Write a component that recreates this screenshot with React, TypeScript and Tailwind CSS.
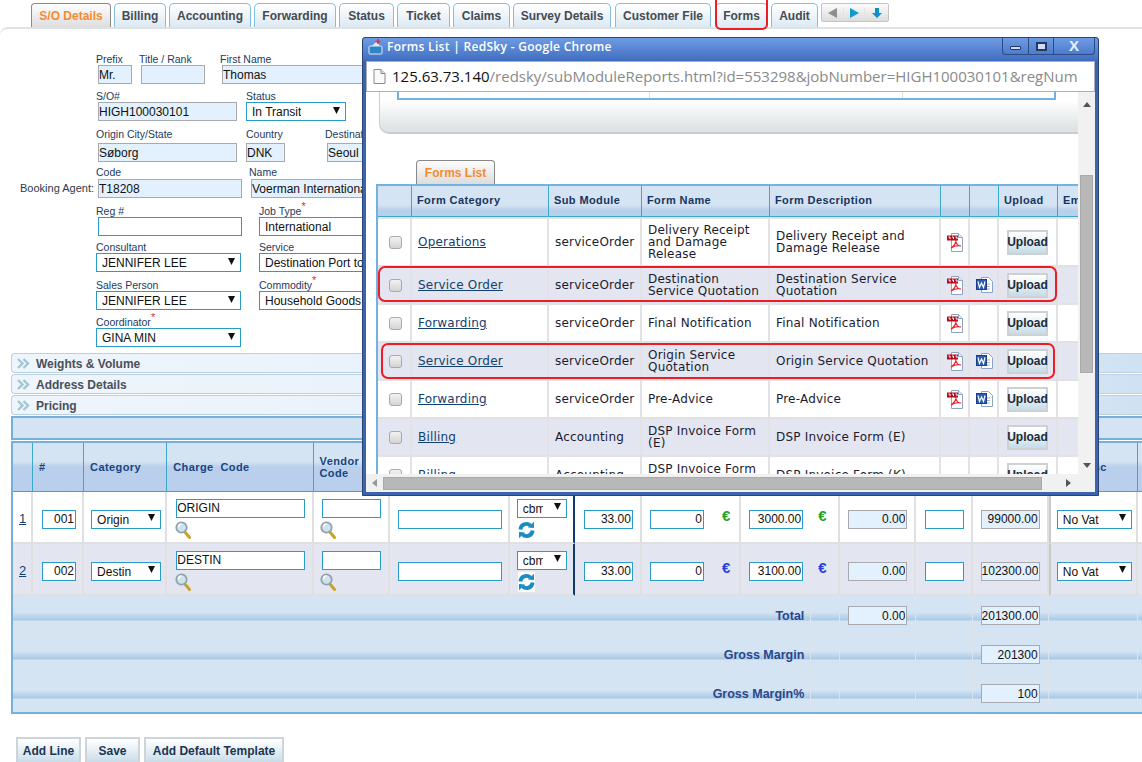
import React from 'react';

const ARIAL = "font-['Liberation_Sans',Arial,sans-serif]";
const POPUP_FONT = "font-['DejaVu_Sans',Verdana,sans-serif] tracking-[0.2px]";

const TABS = [
  { name: 'Billing', w: 'w-[52px]' },
  { name: 'Accounting', w: 'w-[82px]' },
  { name: 'Forwarding', w: 'w-[82px]' },
  { name: 'Status', w: 'w-[55px]' },
  { name: 'Ticket', w: 'w-[53px]' },
  { name: 'Claims', w: 'w-[57px]' },
  { name: 'Survey Details', w: 'w-[98px]' },
  { name: 'Customer File', w: 'ml-[1px] w-[96px]' },
  { name: 'Forms', w: 'ml-[1px] w-[53px]' },
  { name: 'Audit', w: 'w-[47px]' },
];

const FORM_ROWS = [
  { cat: 'Operations', mod: 'serviceOrder', name: 'Delivery Receipt\nand Damage\nRelease', desc: 'Delivery Receipt and\nDamage Release', pdf: true, doc: false, tall: true },
  { cat: 'Service Order', mod: 'serviceOrder', name: 'Destination\nService Quotation', desc: 'Destination Service\nQuotation', pdf: true, doc: true },
  { cat: 'Forwarding', mod: 'serviceOrder', name: 'Final Notification', desc: 'Final Notification', pdf: true, doc: false },
  { cat: 'Service Order', mod: 'serviceOrder', name: 'Origin Service\nQuotation', desc: 'Origin Service Quotation', pdf: true, doc: true },
  { cat: 'Forwarding', mod: 'serviceOrder', name: 'Pre-Advice', desc: 'Pre-Advice', pdf: true, doc: true },
  { cat: 'Billing', mod: 'Accounting', name: 'DSP Invoice Form\n(E)', desc: 'DSP Invoice Form (E)', pdf: false, doc: false },
  { cat: 'Billing', mod: 'Accounting', name: 'DSP Invoice Form\n(K)', desc: 'DSP Invoice Form (K)', pdf: false, doc: false },
];

const CHARGE_ROWS = [
  { no: '1', seq: '001', cat: 'Origin', code: 'ORIGIN', rate: '3000.00', euro: 'text-[#1fa32a]', total: '99000.00' },
  { no: '2', seq: '002', cat: 'Destin', code: 'DESTIN', rate: '3100.00', euro: 'text-[#1f3fe0]', total: '102300.00' },
];

const Tri = ({ className = '' }: { className?: string }) => (
  <svg width="7" height="7" viewBox="0 0 7 7" className={className}>
    <polygon points="0,0 7,0 3.500,7" fill="#111" />
  </svg>
);

const Input = ({ value = '', readOnly = false, right = false, className = '' }: { value?: string; readOnly?: boolean; right?: boolean; className?: string }) => (
  <input
    readOnly
    value={value}
    className={`block h-[19px] min-w-0 border pl-0 pr-[1px] text-[12px] text-[#111] outline-none ${ARIAL} ${right ? 'text-right' : ''} ${readOnly ? 'border-[#a9a9b0] bg-[#e3f0fd]' : 'border-[#2a9bc8] bg-white'} ${className}`}
  />
);

const Select = ({ value, className = '', textW = '' }: { value: string; className?: string; textW?: string }) => (
  <div className={`flex h-[19px] items-center justify-between border border-[#2a9bc8] bg-white pl-[5px] pr-[5px] text-[12px] text-[#111] ${ARIAL} ${className}`}>
    <span className={`overflow-hidden whitespace-nowrap pt-[1px] ${textW}`}>{value}</span>
    <Tri className="mb-[3px] shrink-0" />
  </div>
);

const Label = ({ text, star = false, h = 'h-[12px]' }: { text: string; star?: boolean; h?: string }) => (
  <div className={`whitespace-nowrap text-[10.5px] leading-[12px] text-[#1d3a5f] ${h}`}>
    {text}
    {star && <sup className="text-[11px] leading-[0] text-[#ee1c25]">*</sup>}
  </div>
);

const Accordion = ({ text }: { text: string }) => (
  <div className="ml-[11px] mb-[1px] flex h-[20px] items-center rounded-l-[4px] border border-r-0 border-[#bcd0e4] bg-[linear-gradient(90deg,#eef5fc_0%,#e6f0fa_60%,#d0e2f2_100%)] pl-[5px]">
    <svg width="13" height="11" viewBox="0 0 13 11" fill="none" stroke="#a3c6d2" strokeWidth="2.4">
      <path d="M1 1l4.500 4.500L1 10M6.500 1L11 5.500 6.500 10" />
    </svg>
    <span className="ml-[6px] pt-[1px] text-[12px] font-bold text-[#4b4f57]">{text}</span>
  </div>
);

const Lens = () => (
  <svg width="17" height="19" viewBox="0 0 17 19" className="block">
    <path d="M9.500 10.500l5 6" stroke="#c9a227" strokeWidth="3" strokeLinecap="round" />
    <circle cx="6.500" cy="6.500" r="5.200" fill="#cfe3ee" stroke="#8ea3ad" strokeWidth="1.800" />
    <path d="M3.500 6a3 3 0 0 1 3-3" stroke="#fff" strokeWidth="1.400" fill="none" />
  </svg>
);

const Refresh = () => (
  <svg width="17" height="20" viewBox="0 0 17 20" className="block bg-white">
    <g fill="none" stroke="#1a8cc4" strokeWidth="3.800">
      <path d="M2.400 9.500a6 6 0 0 1 10-4" />
      <path d="M14.600 10.500a6 6 0 0 1-10 4" />
    </g>
    <polygon points="10,7.500 16,8 16,1.800" fill="#1a8cc4" />
    <polygon points="7,12.500 1,12 1,18.200" fill="#1a8cc4" />
  </svg>
);

const PdfIcon = () => (
  <svg width="17" height="19" viewBox="0 0 17 19" className="block">
    <path d="M4.500 .5h7l4 4v14h-11z" fill="#fff" stroke="#8ea4c4" />
    <path d="M11.500 .5v4h4" fill="#e3ebf5" stroke="#8ea4c4" />
    <rect x="0" y="2.500" width="11" height="5" fill="#b0101c" />
    <path d="M1.500 4h1.500v2M5 4h1.500v2M8.500 4H10v2" stroke="#fff" strokeWidth="1" fill="none" />
    <path d="M9 7c0 3-2 6-5 8 3-2 7-3 10-2-3 0-5-3-5.500-6z" fill="none" stroke="#e8262c" strokeWidth="1.200" />
  </svg>
);

const WordIcon = () => (
  <svg width="17" height="17" viewBox="0 0 17 17" className="block">
    <path d="M5.500 .5h7l4 4v11h-11z" fill="#fff" stroke="#8ea4c4" />
    <path d="M8 7h6M10 9.500h4M8 12h6" stroke="#9fb3d0" />
    <rect x="0.500" y="2.500" width="10" height="10" fill="#2a5bb5" stroke="#1c3f86" />
    <path d="M2 4.500l1.500 6 2-4.500 2 4.500 1.500-6" fill="none" stroke="#fff" strokeWidth="1.200" />
  </svg>
);

const Upload = () => (
  <div className={`flex h-[25px] w-[41px] items-center justify-center border-2 border-[#cdd1d4] bg-[linear-gradient(180deg,#ffffff_0%,#eef5f8_35%,#c5dce8_100%)] text-[12px] font-bold text-[#1c2a3a] ${ARIAL}`}>
    Upload
  </div>
);

const Oval = ({ className }: { className: string }) => (
  <div className={`absolute rounded-[7px] border-2 border-[#ee1c25] ${className}`} />
);

const FormsPopup = () => (
  <div className="absolute left-[362px] top-[37px] flex h-[459px] w-[737px] flex-col rounded-t-[3px] border border-[#2b4478] bg-[#3c63ad] px-[3px] pb-[3px]">
    <div className="-mx-[3px] flex h-[23px] shrink-0 items-start justify-between rounded-t-[3px] bg-[linear-gradient(180deg,#6e9be2_0%,#5885d2_50%,#3f6cbe_100%)] pl-[5px] pr-[3px]">
      <div className="flex items-center">
        <svg width="16" height="17" viewBox="0 0 16 17">
          <rect x="1" y="7" width="13" height="8" rx="1" fill="#2e86c4" stroke="#dfe8f2" />
          <path d="M4 7l4-4 3 2v2z" fill="#e4e9ef" />
          <path d="M10 0v5M7.500 2.500h5" stroke="#e2343b" strokeWidth="1.600" />
        </svg>
        <span className="ml-[3px] font-['Open_Sans',sans-serif] text-[12px] font-semibold tracking-[0.3px] text-white">Forms List | RedSky - Google Chrome</span>
      </div>
      <div className="flex h-[17px] w-[93px] overflow-hidden rounded-b-[4px] border border-t-0 border-[#2b4a87]">
        <div className="flex w-[26px] items-center justify-center border-r border-[#2b4a87]">
          <div className="mt-[4px] h-[4px] w-[11px] rounded-[1px] border border-[#21386a] bg-[#cfdcf2]" />
        </div>
        <div className="flex w-[25px] items-center justify-center border-r border-[#2b4a87]">
          <div className="flex h-[9px] w-[11px] items-center justify-center border-2 border-[#21386a] bg-[#cfdcf2]" />
        </div>
        <div className={`flex-1 text-center text-[15px] font-bold leading-[16px] text-[#e8f0ff] ${ARIAL}`}>X</div>
      </div>
    </div>
    <div className="flex h-[31px] shrink-0 items-center overflow-hidden border border-[#a8aeb8] bg-white pl-[6px]">
      <svg width="13" height="15" viewBox="0 0 13 15" className="shrink-0">
        <path d="M1 .5h7l4 4v10H1z" fill="#fafafa" stroke="#8a8a8a" />
        <path d="M8 .5v4h4" fill="#ddd" stroke="#8a8a8a" />
      </svg>
      <div className="ml-[6px] whitespace-nowrap font-['Open_Sans',sans-serif] text-[15px] text-[#8a8a8a]">
        <span className="text-[#111]">125.63.73.140</span>/redsky/subModuleReports.html?id=553298&amp;jobNumber=HIGH100030101&amp;regNum
      </div>
    </div>
    <div className="flex min-h-0 flex-1 flex-col bg-white">
      <div className="flex min-h-0 flex-1">
        <div className="min-w-0 flex-1 overflow-hidden">
          <div className="ml-[13px] h-[42px] rounded-bl-[10px] border-b-2 border-l border-[#c9cdd0] bg-[linear-gradient(180deg,#ffffff_20%,#e0e4e6_90%)]">
            <div className="ml-[17px] flex h-[8px] w-[659px] border-x-2 border-b-2 border-[#74b1de] bg-white">
              <div className="w-[251px] border-r border-[#ddd]" />
              <div className="w-[253px] border-r border-[#ddd]" />
            </div>
          </div>
          <div className="ml-[50px] mt-[26px] flex h-[24px] w-[79px] items-center justify-center rounded-t-[4px] border border-b-0 border-[#888] bg-[linear-gradient(180deg,#fdfdfd_0%,#dcdcdc_100%)] text-[12px] font-bold text-[#f58b2f]">
            Forms List
          </div>
          <table className="ml-[10px] w-[703px] table-fixed border-separate border-spacing-0 border-l-2 border-t-2 border-[#74b1de] text-[12px] text-[#1b1b2f]">
            <colgroup>
              <col className="w-[34px]" />
              <col className="w-[137px]" />
              <col className="w-[93px]" />
              <col className="w-[128px]" />
              <col className="w-[171px]" />
              <col className="w-[29px]" />
              <col className="w-[29px]" />
              <col className="w-[59px]" />
              <col className="w-[21px]" />
            </colgroup>
            <thead>
              <tr className="h-[31px]">
                {['', 'Form Category', 'Sub Module', 'Form Name', 'Form Description', '', '', 'Upload', 'Em'].map((h, i) => (
                  <th key={i} className="overflow-hidden whitespace-nowrap border-b border-r border-[#3aa9c9] bg-[linear-gradient(180deg,#d5e4f3_0%,#d5e4f3_62%,#b8d0ec_82%,#b8d0ec_100%)] pb-[2px] pl-[5px] text-left text-[11px] font-bold tracking-[0.4px] text-[#17345f]">
                    {h}
                  </th>
                ))}
              </tr>
            </thead>
            <tbody>
              {FORM_ROWS.map((r, i) => (
                <tr key={i} className={`${r.tall ? 'h-[48px]' : 'h-[38px]'} ${i % 2 === 1 ? 'bg-[#e3e6f1]' : 'bg-white'}`}>
                  <td className="border-r-2 border-t-2 border-[#e2e2e4]">
                    <div className="ml-[11px] h-[13px] w-[13px] rounded-[3px] border border-[#a9a9a9] bg-[linear-gradient(180deg,#f2f2f2_0%,#d4d4d4_100%)]" />
                  </td>
                  <td className="border-r-2 border-t-2 border-[#e2e2e4] pl-[6px]">
                    <span className={`${POPUP_FONT} text-[12px] text-[#12406f] underline`}>{r.cat}</span>
                  </td>
                  <td className={`border-r-2 border-t-2 border-[#e2e2e4] pl-[6px] ${POPUP_FONT}`}>{r.mod}</td>
                  <td className={`whitespace-pre-line border-r-2 border-t-2 border-[#e2e2e4] pl-[6px] leading-[12px] ${POPUP_FONT}`}>{r.name}</td>
                  <td className={`whitespace-pre-line border-r-2 border-t-2 border-[#e2e2e4] pl-[6px] leading-[12px] ${POPUP_FONT}`}>{r.desc}</td>
                  <td className="border-r-2 border-t-2 border-[#e2e2e4] pl-[6px]">{r.pdf && <PdfIcon />}</td>
                  <td className="border-r-2 border-t-2 border-[#e2e2e4] pl-[6px]">{r.doc && <WordIcon />}</td>
                  <td className="border-r-2 border-t-2 border-[#e2e2e4] pl-[8px]"><Upload /></td>
                  <td className="border-t-2 border-[#e2e2e4]" />
                </tr>
              ))}
            </tbody>
          </table>
        </div>
        <div className="flex w-[17px] shrink-0 flex-col items-center bg-[#f1f1f1]">
          <svg width="8" height="5" viewBox="0 0 8 5" className="mt-[10px]"><polygon points="4,0 8,5 0,5" fill="#555" /></svg>
          <div className="mt-[68px] h-[198px] w-[13px] border border-[#a9a9a9] bg-[#b8b8b8]" />
          <svg width="8" height="5" viewBox="0 0 8 5" className="mt-[90px]"><polygon points="0,0 8,0 4,5" fill="#555" /></svg>
        </div>
      </div>
      <div className="flex h-[18px] shrink-0 items-center bg-[#f1f1f1]">
        <svg width="5" height="8" viewBox="0 0 5 8" className="ml-[6px]"><polygon points="5,0 5,8 0,4" fill="#999" /></svg>
        <div className="ml-[6px] h-[13px] w-[659px] border border-[#a9a9a9] bg-[#b8b8b8]" />
        <svg width="5" height="8" viewBox="0 0 5 8" className="ml-[24px]"><polygon points="0,0 5,4 0,8" fill="#555" /></svg>
      </div>
    </div>
    <Oval className="left-[15px] top-[228px] h-[36px] w-[679px]" />
    <Oval className="left-[18px] top-[305px] h-[36px] w-[674px]" />
  </div>
);

export default function App() {
  return (
    <div className={`relative h-[762px] w-[1142px] overflow-hidden bg-white text-[12px] ${ARIAL}`}>
      {/* tabs */}
      <div className="flex h-[27px] gap-[3px] pl-[31px] pt-[3px]">
        <div className="flex h-[24px] w-[80px] items-center justify-center rounded-t-[4px] border border-b-0 border-[#8a8a8a] bg-[linear-gradient(180deg,#fdfdfd_0%,#dedede_100%)] font-bold text-[#f58b2f]">
          S/O Details
        </div>
        {TABS.map(t => (
          <div key={t.name} className={`flex h-[24px] items-center justify-center rounded-t-[5px] border border-b-0 border-[#84bde0] bg-[linear-gradient(180deg,#ffffff_0%,#dde9f3_100%)] font-bold text-[#444b53] ${t.w}`}>
            {t.name}
          </div>
        ))}
        <div className="flex h-[19px] w-[68px] items-center rounded-[2px] border border-[#c4c4c4] bg-[linear-gradient(180deg,#fbfbfb_0%,#dcdcdc_100%)]">
          <div className="flex w-[22px] justify-center border-r border-[#e4e4e4]">
            <svg width="9" height="10" viewBox="0 0 9 10"><polygon points="9,0 9,10 0,5" fill="#8e8e8e" /></svg>
          </div>
          <div className="flex w-[21px] justify-center border-r border-[#e4e4e4]">
            <svg width="9" height="10" viewBox="0 0 9 10"><polygon points="0,0 9,5 0,10" fill="#0f9ad1" /></svg>
          </div>
          <div className="flex flex-1 justify-center">
            <svg width="10" height="10" viewBox="0 0 10 10"><polygon points="3,0 7,0 7,5 10,5 5,10 0,5 3,5" fill="#0f8fc9" /></svg>
          </div>
        </div>
      </div>
      <div className="absolute left-[715px] top-0 h-[30px] w-[53px] rounded-b-[6px] border-2 border-t-0 border-[#ee1c25]" />

      <div className="rounded-tl-[8px] border-t-2 border-[#dde2e4]">
        {/* service order form */}
        <div className="pl-[96px] pt-[24px]">
          <div className="flex">
            <div className="w-[36px]"><Label text="Prefix" /><Input readOnly value="Mr." className="ml-[2px] w-[34px]" /></div>
            <div className="ml-[7px] w-[66px]"><Label text="Title / Rank" /><Input readOnly className="ml-[2px] w-[64px]" /></div>
            <div className="ml-[15px] w-[200px]"><Label text="First Name" /><Input readOnly value="Thomas" className="ml-[2px] w-[198px]" /></div>
          </div>
          <div className="mt-[6px] flex">
            <div className="w-[141px]"><Label text="S/O#" /><Input readOnly value="HIGH100030101" className="ml-[2px] w-[139px]" /></div>
            <div className="ml-[9px] w-[100px]"><Label text="Status" /><Select value="In Transit" /></div>
          </div>
          <div className="mt-[7px] flex">
            <div className="w-[141px]"><Label text="Origin City/State" h="h-[15px]" /><Input readOnly value="Søborg" className="ml-[2px] w-[139px]" /></div>
            <div className="ml-[9px] w-[39px]"><Label text="Country" h="h-[15px]" /><Input readOnly value="DNK" className="w-[39px]" /></div>
            <div className="ml-[40px] w-[100px]"><Label text="Destination" h="h-[15px]" /><Input readOnly value="Seoul" className="ml-[2px] w-[98px]" /></div>
          </div>
          <div className="relative mt-[4px] flex">
            <div className="absolute bottom-0 left-[-76px] h-[19px] text-[11px] leading-[19px] text-[#2b3a4a]">Booking Agent:</div>
            <div className="w-[146px]"><Label text="Code" h="h-[13px]" /><Input readOnly value="T18208" className="ml-[2px] w-[144px]" /></div>
            <div className="ml-[7px] w-[160px]"><Label text="Name" h="h-[13px]" /><Input readOnly value="Voerman International" className="ml-[2px] w-[158px]" /></div>
          </div>
          <div className="mt-[7px] flex">
            <div className="w-[146px]"><Label text="Reg #" /><Input className="ml-[2px] w-[144px]" /></div>
            <div className="ml-[17px] w-[160px]"><Label text="Job Type" star /><Select value="International" /></div>
          </div>
          <div className="mt-[5px] flex">
            <div className="w-[145px]"><Label text="Consultant" /><Select value="JENNIFER LEE" /></div>
            <div className="ml-[18px] w-[160px]"><Label text="Service" /><Select value="Destination Port to Door" textW="w-[140px]" /></div>
          </div>
          <div className="mt-[7px] flex">
            <div className="w-[145px]"><Label text="Sales Person" /><Select value="JENNIFER LEE" /></div>
            <div className="ml-[18px] w-[160px]"><Label text="Commodity" star /><Select value="Household Goods" /></div>
          </div>
          <div className="mt-[6px] flex">
            <div className="w-[145px]"><Label text="Coordinator" star /><Select value="GINA MIN" /></div>
          </div>
        </div>

        <div className="mt-[6px]">
          <Accordion text="Weights & Volume" />
          <Accordion text="Address Details" />
          <Accordion text="Pricing" />
        </div>

        {/* pricing */}
        <div className="ml-[11px] mt-[1px] h-[24px] border-2 border-r-0 border-[#75b0dc] bg-[#d5e4f3]" />
        <table className="ml-[11px] mt-[1px] w-[1133px] table-fixed border-separate border-spacing-0 border-2 border-r-0 border-[#75b0dc]">
          <colgroup>
            <col className="w-[20px]" />
            <col className="w-[51px]" />
            <col className="w-[83px]" />
            <col className="w-[146px]" />
            <col className="w-[76px]" />
            <col className="w-[120px]" />
            <col className="w-[65px]" />
            <col className="w-[67px]" />
            <col className="w-[99px]" />
            <col className="w-[70px]" />
            <col className="w-[29px]" />
            <col className="w-[75px]" />
            <col className="w-[57px]" />
            <col className="w-[76px]" />
            <col className="w-[89px]" />
            <col className="w-[6px]" />
          </colgroup>
          <thead>
            <tr className="h-[49px]">
              {['', '#', 'Category', 'Charge  Code', 'Vendor Code', '', '', '', '', '', '', '', '', '', 'Vat Desc', ''].map((h, i) => (
                <th
                  key={i}
                  className={`whitespace-pre-wrap border-b border-[#3aa9c9] bg-[linear-gradient(180deg,#d5e4f3_0%,#d5e4f3_38%,#b9cfec_50%,#b9cfec_100%)] pl-[6px] text-left text-[11px] font-bold leading-[12px] tracking-[0.4px] text-[#17457f] ${i !== 9 ? 'border-r' : ''} ${i === 14 ? 'pl-[9px]' : ''}`}
                >
                  {h}
                </th>
              ))}
            </tr>
          </thead>
          <tbody>
            {CHARGE_ROWS.map((r, i) => {
              const cell = 'border-b-2 border-r-2 border-[#e0e0e2] p-0 pt-[4px]';
              return (
                <tr key={r.no} className={`h-[52px] ${i === 1 ? 'bg-[#e3e6f1]' : 'bg-white'}`}>
                  <td className={`${cell} pl-[6px] text-[13px] text-[#12406f] underline`}>{r.no}</td>
                  <td className={cell}><Input value={r.seq} right className="ml-[9px] w-[34px]" /></td>
                  <td className={cell}><Select value={r.cat} className="ml-[7px] w-[70px]" /></td>
                  <td className={cell}>
                    <Input value={r.code} className="ml-[9px] w-[129px]" />
                    <div className="ml-[8px] mt-[3px]"><Lens /></div>
                  </td>
                  <td className={cell}>
                    <Input className="ml-[8px] w-[59px]" />
                    <div className="ml-[6px] mt-[3px]"><Lens /></div>
                  </td>
                  <td className={cell}><Input className="ml-[8px] w-[104px]" /></td>
                  <td className="border-b-2 border-r-2 border-b-[#e0e0e2] border-r-[#0f3a6b] p-0 pt-[4px]">
                    <Select value="cbm" textW="w-[20px]" className="ml-[7px] w-[50px]" />
                    <div className="ml-[8px] mt-[2px]"><Refresh /></div>
                  </td>
                  <td className={cell}><Input value="33.00" right className="ml-[9px] w-[49px]" /></td>
                  <td className={cell}>
                    <div className="flex items-center">
                      <Input value="0" right className="ml-[8px] w-[54px]" />
                      <span className={`mb-[6px] ml-[18px] text-[15px] font-bold ${r.euro}`}>€</span>
                    </div>
                  </td>
                  <td className="border-b-2 border-[#e0e0e2] p-0 pt-[4px]"><Input value={r.rate} right className="ml-[8px] w-[54px]" /></td>
                  <td className={cell}><span className={`mb-[5px] ml-[7px] block text-[15px] font-bold ${r.euro}`}>€</span></td>
                  <td className={cell}><Input readOnly value="0.00" right className="ml-[8px] w-[59px]" /></td>
                  <td className={cell}><Input className="ml-[9px] w-[39px]" /></td>
                  <td className={cell}><Input readOnly value={r.total} right className="ml-[8px] w-[59px]" /></td>
                  <td className="border-b-2 border-l-2 border-r-2 border-b-[#e0e0e2] border-l-[#c9c9c9] border-r-[#e0e0e2] p-0 pt-[4px]"><Select value="No Vat" className="ml-[6px] w-[75px]" /></td>
                  <td className="border-b-2 border-[#e0e0e2] p-0" />
                </tr>
              );
            })}
            {[
              { label: 'Total', h: 'h-[39px]', credit: '0.00', value: '201300.00' },
              { label: 'Gross Margin', h: 'h-[39px]', credit: '', value: '201300' },
              { label: 'Gross Margin%', h: 'h-[38px]', credit: '', value: '100' },
            ].map(f => {
              const grad = 'bg-[linear-gradient(180deg,#d5e4f3_0px,#d5e4f3_16px,#a9c9e6_24px,#d5e4f3_25px,#d5e4f3_100%)] border-b border-r border-[#dde3ea] p-0';
              return (
                <tr key={f.label} className={f.h}>
                  <td colSpan={10} className={`${grad} pr-[6px] text-right align-top text-[12.5px] font-bold text-[#28478c]`}>
                    <div className="pt-[11px]">{f.label}</div>
                  </td>
                  <td className={grad} />
                  <td className={`${grad} align-top`}>
                    {f.credit && <Input readOnly value={f.credit} right className="ml-[8px] mt-[10px] w-[59px]" />}
                  </td>
                  <td className={grad} />
                  <td className={`${grad} align-top`}>
                    <Input readOnly value={f.value} right className="ml-[8px] mt-[10px] w-[59px]" />
                  </td>
                  <td className={grad} />
                  <td className={grad} />
                </tr>
              );
            })}
          </tbody>
        </table>

        <div className="ml-[16px] mt-[23px] flex gap-[4px]">
          {[
            { name: 'Add Line', w: 'w-[65px]' },
            { name: 'Save', w: 'w-[55px]' },
            { name: 'Add Default Template', w: 'w-[140px]' },
          ].map(b => (
            <div key={b.name} className={`flex h-[28px] items-center justify-center border-2 border-[#cdd4da] bg-[linear-gradient(180deg,#ffffff_0%,#eaf2f6_40%,#c6dbe8_100%)] font-bold text-[#1c3553] ${b.w}`}>
              {b.name}
            </div>
          ))}
        </div>
      </div>

      <FormsPopup />
    </div>
  );
}
